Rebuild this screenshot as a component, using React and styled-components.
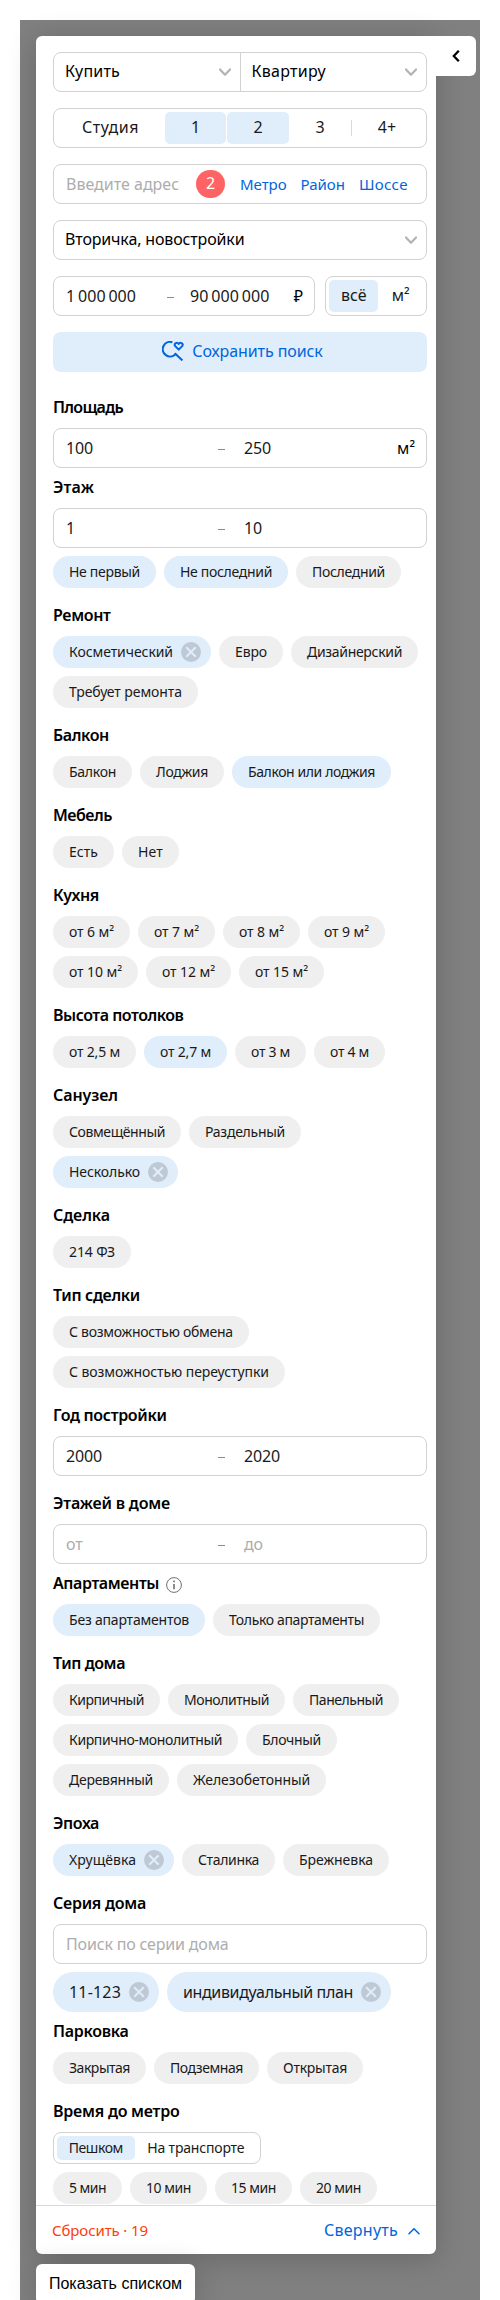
import React from 'react';
import styled, { createGlobalStyle } from 'styled-components';

const GlobalStyle = createGlobalStyle`
  * { box-sizing: border-box; }
  body {
    margin: 0;
    background: #fff;
    color: #1a1a1a;
    font-family: "Noto Sans", "Open Sans", sans-serif;
    font-size: 16px;
  }
`;

const Viewport = styled.div`
  height: 2300px;
  padding: 20px 20px 0;
  overflow: hidden;
`;

const Backdrop = styled.div`
  height: 2280px;
  padding: 16px 0 0 16px;
  background: #808080;
`;

const PanelRow = styled.div`
  display: flex;
  align-items: flex-start;
`;

const Panel = styled.main`
  width: 400px;
  height: 2218px;
  background: #fff;
  border-radius: 6px 0 6px 6px;
  box-shadow: 0 4px 30px rgba(0, 0, 0, 0.2);
`;

const CollapseTab = styled.button`
  display: flex;
  align-items: center;
  justify-content: center;
  width: 40px;
  height: 40px;
  padding: 0 1px 0 0;
  border: 0;
  border-radius: 0 6px 6px 0;
  background: #fff;
`;

const Body = styled.div`
  padding: 16px 9px 0 17px;
`;

const Filters = styled.div`
  display: flex;
  flex-direction: column;
  gap: 16px;
`;

const Field = styled.div`
  display: flex;
  align-items: center;
  width: ${(p) => (p.$width ? `${p.$width}px` : '100%')};
  height: ${(p) => p.$height || 40}px;
  padding: ${(p) => p.$pad || '0'};
  border: 1px solid #d2d2d2;
  border-radius: 8px;
  line-height: 24px;
`;

const Select = styled.div`
  display: flex;
  flex: 1;
  align-items: center;
  justify-content: space-between;
  height: 38px;
  padding: 0 9px 2px 11px;
  color: #000;
  & + & { border-left: 1px solid #d2d2d2; }
  svg { margin-top: 2px; }
`;

const Text = styled.span`
  letter-spacing: ${(p) => p.$ls || 0}px;
  white-space: nowrap;
`;

const Segment = styled.span`
  display: flex;
  align-items: center;
  justify-content: center;
  width: ${(p) => p.$width}px;
  height: ${(p) => p.$height || 32}px;
  padding-bottom: ${(p) => (p.$height ? 0 : 2)}px;
  margin-right: 1px;
  border-radius: 5px;
  background: ${(p) => (p.$active ? '#e0edfb' : 'transparent')};
  font-size: ${(p) => p.$size || 16}px;
  letter-spacing: ${(p) => p.$ls || 0}px;
  white-space: nowrap;
`;

const Separator = styled.span`
  width: 1px;
  height: 16px;
  background: #d9d9d9;
`;

const Placeholder = styled(Text)`
  color: #adadad;
`;

const Count = styled.span`
  width: 29px;
  height: 28px;
  margin: 0 15px 0 17px;
  border-radius: 14px;
  background: #ff6464;
  color: #fff;
  line-height: 27px;
  text-align: center;
`;

const GeoLinks = styled.div`
  display: flex;
  gap: 14px;
  color: #0065dd;
  font-size: 15px;
`;

const PriceRow = styled.div`
  display: flex;
  gap: 10px;
`;

const RangeFrom = styled(Text)`
  width: ${(p) => p.$width}px;
  color: ${(p) => (p.$empty ? '#adadad' : '#1a1a1a')};
`;

const RangeTo = styled(Text)`
  flex: 1;
  color: ${(p) => (p.$empty ? '#adadad' : '#1a1a1a')};
`;

const Unit = styled.span`
  color: #000;
`;

const Dash = styled.span`
  width: 7px;
  height: 1px;
  margin: 2px ${(p) => p.$after}px 0 0;
  background: #8c8c8c;
`;

const SaveButton = styled.button`
  display: flex;
  align-items: center;
  justify-content: center;
  gap: 8px;
  height: 40px;
  padding: 0 0 2px 5px;
  border: 0;
  border-radius: 8px;
  background: #e0edfb;
  color: #0065dd;
  font: inherit;
`;

const Section = styled.section`
  margin-top: ${(p) => (p.$tight ? 0 : 8)}px;
`;

const FirstSection = styled(Section)`
  margin-top: 16px;
`;

const Heading = styled.h3`
  display: flex;
  align-items: center;
  gap: 7px;
  height: 40px;
  margin: 0;
  padding-bottom: 2px;
  color: #000;
  font-size: 16px;
  font-weight: 600;
  line-height: 24px;
  svg { margin-top: 3px; }
`;

const ChipList = styled.div`
  display: flex;
  flex-wrap: wrap;
  gap: 8px;
  margin-top: ${(p) => p.$after || 0}px;
`;

const ChipBox = styled.span`
  display: flex;
  align-items: center;
  gap: 8px;
  width: ${(p) => p.$width}px;
  height: ${(p) => (p.$large ? 40 : 32)}px;
  padding-left: 16px;
  border-radius: 20px;
  background: ${(p) => (p.$active ? '#e0edfb' : '#efefef')};
  font-size: ${(p) => (p.$large ? 16 : 14)}px;
  line-height: 20px;
`;

const Footer = styled.footer`
  display: flex;
  align-items: center;
  justify-content: space-between;
  height: 49px;
  margin-top: 1px;
  padding: 0 16px;
  border-top: 1px solid #d9d9d9;
`;

const Reset = styled(Text)`
  color: #ff3b0f;
  font-size: 15px;
`;

const Collapse = styled.span`
  display: flex;
  align-items: center;
  gap: 10px;
  padding-bottom: 1px;
  color: #0065dd;
  svg { margin-top: 2px; }
`;

const ShowList = styled.button`
  display: block;
  position: relative;
  width: 159px;
  height: 40px;
  margin-top: 10px;
  padding: 0 0 1px;
  border: 0;
  border-radius: 6px;
  background: #fff;
  box-shadow: 0 4px 30px rgba(0, 0, 0, 0.2);
  color: #000;
  font: 16px "Liberation Sans", Arial, sans-serif;
`;

const ChevronDown = () => (
  <svg width="12" height="8" viewBox="0 0 12 8" fill="none">
    <path d="M1 1.4 6 6.8 11 1.4" stroke="#b3b3b3" strokeWidth="2.2" strokeLinecap="round" strokeLinejoin="round" />
  </svg>
);

const ChevronUp = () => (
  <svg width="12" height="8" viewBox="0 0 12 8" fill="none">
    <path d="M1 6.8 6 1.8 11 6.8" stroke="#0065dd" strokeWidth="1.5" strokeLinecap="round" />
  </svg>
);

const ChevronLeft = () => (
  <svg width="8" height="12" viewBox="0 0 8 12" fill="none">
    <path d="M6.8 0.8 1.8 6 6.8 11.2" stroke="#000" strokeWidth="2.3" />
  </svg>
);

const SaveIcon = () => (
  <svg width="22" height="20" viewBox="0 0 22 20" fill="none" stroke="#0065dd" strokeWidth="2.1">
    <path d="M10.4 1.3A7.3 7.3 0 1 0 13.4 13.2" />
    <path d="m12.8 12.2 7.6 7.2" />
    <path d="M16.7 8.6 13 4.9a2 2 0 0 1 3.7-2 2 2 0 0 1 3.7 2Z" strokeWidth="2" strokeLinejoin="round" />
  </svg>
);

const InfoIcon = () => (
  <svg width="16" height="16" viewBox="0 0 16 16" fill="none">
    <circle cx="8" cy="8" r="7.4" stroke="#707070" />
    <path d="M8 3.4v1.8M8 7v5.2" stroke="#707070" strokeWidth="1.6" />
  </svg>
);

const CloseIcon = () => (
  <svg width="20" height="20" viewBox="0 0 20 20" fill="none">
    <circle cx="10" cy="10" r="10" fill="#bec9d5" />
    <path d="m5.3 5.3 9.4 9.4M14.7 5.3l-9.4 9.4" stroke="#e0edfb" strokeWidth="2" />
  </svg>
);

const Chip = ({ label, width, ls, active, closable, large }) => (
  <ChipBox $width={width} $active={active} $large={large}>
    <Text $ls={ls}>{label}</Text>
    {closable && <CloseIcon />}
  </ChipBox>
);

const Chips = ({ items, after, large }) => (
  <ChipList $after={after}>
    {items.map(([label, width, ls, state]) => (
      <Chip
        key={label}
        label={label}
        width={width}
        ls={ls}
        large={large}
        active={Boolean(state)}
        closable={state === 'closable'}
      />
    ))}
  </ChipList>
);

const Range = ({ from, to, unit, empty }) => (
  <Field $pad="0 11px 0 12px">
    <RangeFrom $width={152} $ls={-0.15} $empty={empty}>{from}</RangeFrom>
    <Dash $after={19} />
    <RangeTo $ls={-0.15} $empty={empty}>{to}</RangeTo>
    {unit && <Unit>{unit}</Unit>}
  </Field>
);

const Titled = ({ title, ls, tight, info, children }) => (
  <Section $tight={tight}>
    <Heading>
      <Text $ls={ls}>{title}</Text>
      {info && <InfoIcon />}
    </Heading>
    {children}
  </Section>
);

export default function App() {
  return (
    <>
      <GlobalStyle />
      <Viewport>
        <Backdrop>
          <PanelRow>
            <Panel>
              <Body>
                <Filters>
                  <Field>
                    <Select><Text $ls={0.2}>Купить</Text><ChevronDown /></Select>
                    <Select><Text $ls={0.28}>Квартиру</Text><ChevronDown /></Select>
                  </Field>
                  <Field $pad="0 3px">
                    <Segment $width={107} $ls={0.52}>Студия</Segment>
                    <Segment $width={61} $active>1</Segment>
                    <Segment $width={62} $active>2</Segment>
                    <Segment $width={60}>3</Segment>
                    <Separator />
                    <Segment $width={70}>4+</Segment>
                  </Field>
                  <Field $pad="0 12px">
                    <Placeholder>Введите адрес</Placeholder>
                    <Count>2</Count>
                    <GeoLinks>
                      <Text $ls={-0.05}>Метро</Text>
                      <Text>Район</Text>
                      <Text $ls={0.3}>Шоссе</Text>
                    </GeoLinks>
                  </Field>
                  <Field>
                    <Select><Text $ls={-0.15}>Вторичка, новостройки</Text><ChevronDown /></Select>
                  </Field>
                  <PriceRow>
                    <Field $width={262} $pad="0 11px 0 12px">
                      <RangeFrom $width={101} $ls={0.07}>1{'\u2009'}000{'\u2009'}000</RangeFrom>
                      <Dash $after={16} />
                      <RangeTo $ls={0.1}>90{'\u2009'}000{'\u2009'}000</RangeTo>
                      <Unit>₽</Unit>
                    </Field>
                    <Field $width={102} $pad="0 3px">
                      <Segment $width={50} $active $ls={-0.1}>всё</Segment>
                      <Segment $width={43}>м²</Segment>
                    </Field>
                  </PriceRow>
                  <SaveButton>
                    <SaveIcon />
                    <Text $ls={-0.09}>Сохранить поиск</Text>
                  </SaveButton>
                </Filters>

                <FirstSection>
                  <Heading><Text $ls={-0.71}>Площадь</Text></Heading>
                  <Range from="100" to="250" unit="м²" />
                </FirstSection>
                <Titled title="Этаж" ls={0.13} tight>
                  <Range from="1" to="10" />
                  <Chips after={8} items={[
                    ['Не первый', 103, -0.3, 'on'],
                    ['Не последний', 124, -0.31, 'on'],
                    ['Последний', 105, -0.31],
                  ]} />
                </Titled>
                <Titled title="Ремонт" ls={-0.36}>
                  <Chips items={[
                    ['Косметический', 158, -0.07, 'closable'],
                    ['Евро', 64, -0.13],
                    ['Дизайнерский', 127, -0.31],
                    ['Требует ремонта', 145, -0.08],
                  ]} />
                </Titled>
                <Titled title="Балкон" ls={-0.38}>
                  <Chips items={[
                    ['Балкон', 79, -0.28],
                    ['Лоджия', 84, -0.31],
                    ['Балкон или лоджия', 159, -0.4, 'on'],
                  ]} />
                </Titled>
                <Titled title="Мебель" ls={-0.49}>
                  <Chips items={[['Есть', 61, 0.04], ['Нет', 57, 0.17]]} />
                </Titled>
                <Titled title="Кухня" ls={-0.37}>
                  <Chips items={[
                    ['от 6 м²', 77, -0.09],
                    ['от 7 м²', 77, -0.09],
                    ['от 8 м²', 77, -0.09],
                    ['от 9 м²', 77, -0.09],
                    ['от 10 м²', 85, -0.08],
                    ['от 12 м²', 85, -0.08],
                    ['от 15 м²', 85, -0.08],
                  ]} />
                </Titled>
                <Titled title="Высота потолков" ls={-0.48}>
                  <Chips items={[
                    ['от 2,5 м', 83, -0.19],
                    ['от 2,7 м', 83, -0.19, 'on'],
                    ['от 3 м', 71, -0.29],
                    ['от 4 м', 71, -0.29],
                  ]} />
                </Titled>
                <Titled title="Санузел" ls={-0.08}>
                  <Chips items={[
                    ['Совмещённый', 128, -0.4],
                    ['Раздельный', 112, -0.27],
                    ['Несколько', 125, -0.09, 'closable'],
                  ]} />
                </Titled>
                <Titled title="Сделка" ls={-0.09}>
                  <Chips items={[['214 ФЗ', 78, -0.13]]} />
                </Titled>
                <Titled title="Тип сделки" ls={-0.33}>
                  <Chips items={[
                    ['С возможностью обмена', 196, -0.26],
                    ['С возможностью переуступки', 232, -0.07],
                  ]} />
                </Titled>
                <Titled title="Год постройки" ls={-0.33}>
                  <Range from="2000" to="2020" />
                </Titled>
                <Titled title="Этажей в доме" ls={-0.18}>
                  <Range from="от" to="до" empty />
                </Titled>
                <Titled title="Апартаменты" ls={-0.4} tight info>
                  <Chips items={[
                    ['Без апартаментов', 152, -0.2, 'on'],
                    ['Только апартаменты', 167, -0.36],
                  ]} />
                </Titled>
                <Titled title="Тип дома" ls={-0.43}>
                  <Chips items={[
                    ['Кирпичный', 107, -0.48],
                    ['Монолитный', 117, -0.43],
                    ['Панельный', 106, -0.46],
                    ['Кирпично-монолитный', 185, -0.37],
                    ['Блочный', 91, -0.31],
                    ['Деревянный', 116, -0.26],
                    ['Железобетонный', 149, -0.09],
                  ]} />
                </Titled>
                <Titled title="Эпоха" ls={-0.37}>
                  <Chips items={[
                    ['Хрущёвка', 121, 0.06, 'closable'],
                    ['Сталинка', 93, -0.34],
                    ['Брежневка', 106, -0.03],
                  ]} />
                </Titled>
                <Titled title="Серия дома" ls={-0.26}>
                  <Field $pad="0 12px">
                    <Placeholder $ls={-0.17}>Поиск по серии дома</Placeholder>
                  </Field>
                  <Chips large after={8} items={[
                    ['11-123', 106, 0.18, 'closable'],
                    ['индивидуальный план', 224, -0.37, 'closable'],
                  ]} />
                </Titled>
                <Titled title="Парковка" ls={-0.28} tight>
                  <Chips items={[
                    ['Закрытая', 93, -0.48],
                    ['Подземная', 105, -0.41],
                    ['Открытая', 96, -0.26],
                  ]} />
                </Titled>
                <Titled title="Время до метро" ls={-0.24}>
                  <Field $width={208} $height={32} $pad="0 3px">
                    <Segment $width={78} $height={24} $size={14} $ls={-0.45} $active>Пешком</Segment>
                    <Segment $width={121} $height={24} $size={14} $ls={-0.18}>На транспорте</Segment>
                  </Field>
                  <Chips after={8} items={[
                    ['5 мин', 69, -0.54],
                    ['10 мин', 77, -0.45],
                    ['15 мин', 77, -0.45],
                    ['20 мин', 77, -0.45],
                  ]} />
                </Titled>
              </Body>
              <Footer>
                <Reset $ls={-0.11}>Сбросить · 19</Reset>
                <Collapse>
                  <Text $ls={0.26}>Свернуть</Text>
                  <ChevronUp />
                </Collapse>
              </Footer>
            </Panel>
            <CollapseTab aria-label="Свернуть панель"><ChevronLeft /></CollapseTab>
          </PanelRow>
          <ShowList>Показать списком</ShowList>
        </Backdrop>
      </Viewport>
    </>
  );
}
